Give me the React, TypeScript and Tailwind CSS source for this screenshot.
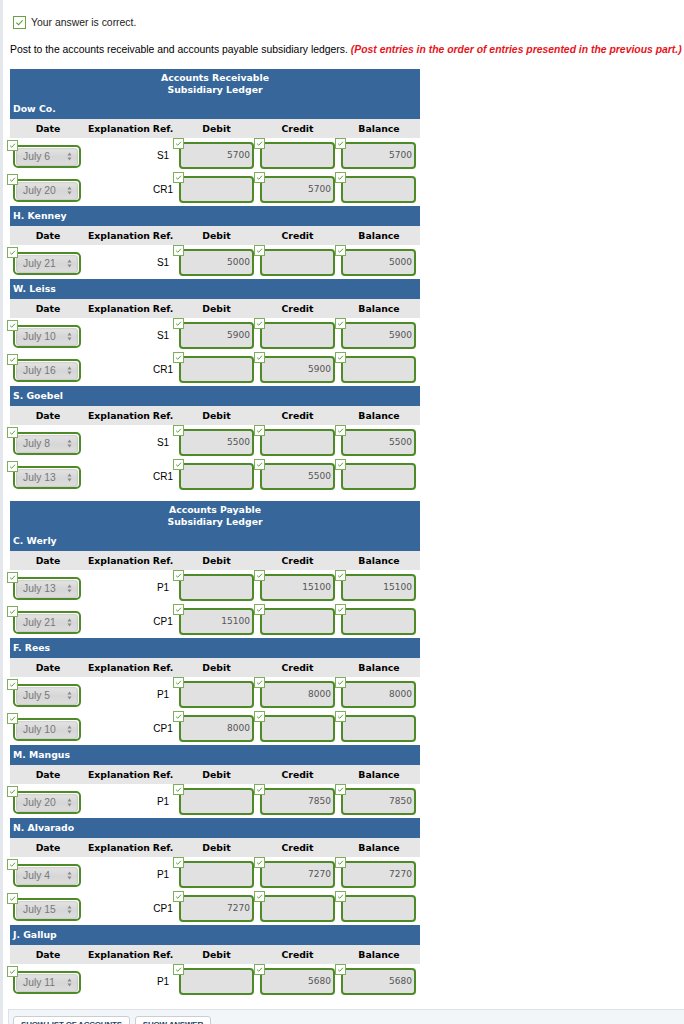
import React from "react";

type Row = { date: string; ref: string; debit: string; credit: string; balance: string };
type Account = { name: string; rows: Row[] };

const r = (date: string, ref: string, debit: string, credit: string, balance: string): Row => ({ date, ref, debit, credit, balance });

const AR: Account[] = [
  { name: "Dow Co.", rows: [r("July 6", "S1", "5700", "", "5700"), r("July 20", "CR1", "", "5700", "")] },
  { name: "H. Kenney", rows: [r("July 21", "S1", "5000", "", "5000")] },
  { name: "W. Leiss", rows: [r("July 10", "S1", "5900", "", "5900"), r("July 16", "CR1", "", "5900", "")] },
  { name: "S. Goebel", rows: [r("July 8", "S1", "5500", "", "5500"), r("July 13", "CR1", "", "5500", "")] },
];

const AP: Account[] = [
  { name: "C. Werly", rows: [r("July 13", "P1", "", "15100", "15100"), r("July 21", "CP1", "15100", "", "")] },
  { name: "F. Rees", rows: [r("July 5", "P1", "", "8000", "8000"), r("July 10", "CP1", "8000", "", "")] },
  { name: "M. Mangus", rows: [r("July 20", "P1", "", "7850", "7850")] },
  { name: "N. Alvarado", rows: [r("July 4", "P1", "", "7270", "7270"), r("July 15", "CP1", "7270", "", "")] },
  { name: "J. Gallup", rows: [r("July 11", "P1", "", "5680", "5680")] },
];

const GRID = "grid grid-cols-[78px_62px_26px_81px_81px_82px]";

function Check({ size = 11 }: { size?: number }) {
  return (
    <div
      className="bg-white border border-[#7fae5c] flex items-center justify-center"
      style={{ width: size, height: size }}
    >
      <svg viewBox="0 0 10 10" width={size - 4} height={size - 4}>
        <path d="M1.5 5.2 L4 7.5 L8.5 2.5" fill="none" stroke="#4f9a2a" strokeWidth="1.3" />
      </svg>
    </div>
  );
}

function ColHeader() {
  return (
    <div className={`${GRID} h-[19px] bg-[#e6e6e6] items-center text-[9.3px] font-bold text-black font-['DejaVu_Sans',sans-serif]`}>
      <div className="text-center pr-[2px]">Date</div>
      <div className="text-center pr-[3px]">Explanation</div>
      <div className="text-center">Ref.</div>
      <div className="text-center">Debit</div>
      <div className="text-center">Credit</div>
      <div className="text-center">Balance</div>
    </div>
  );
}

function NumCell({ value }: { value: string }) {
  return (
    <div className="relative pl-[3px] pt-[4px]">
      <div className="absolute left-[-3px] top-0 z-10">
        <Check />
      </div>
      <div className="w-[75px] h-[27px] rounded-[4px] border-2 border-[#4e8a26] bg-[#e1e1e1] flex items-center justify-end pr-[2px] text-[9px] text-[#555] font-['DejaVu_Sans',sans-serif]">
        {value}
      </div>
    </div>
  );
}

function DateCell({ value }: { value: string }) {
  return (
    <div className="relative pl-[3px] pt-[7px]">
      <div className="absolute left-[-3px] top-[2px] z-10">
        <Check />
      </div>
      <div className="w-[68px] h-[23px] rounded-[5px] border-2 border-[#4e8a26] bg-white flex items-center px-[1px]">
        <div className="w-full h-[18px] rounded-[4px] bg-gradient-to-b from-[#e4e4e4] via-[#d6d6d6] to-[#dedede] shadow-[inset_0_0_2px_rgba(0,0,0,0.25)] flex items-center justify-between pl-[7px] pr-[6px] text-[10.3px] text-[#777] font-['Liberation_Sans',sans-serif]">
          <span>{value}</span>
          <svg width="5" height="9" viewBox="0 0 5 9">
            <path d="M2.5 0.5 L4.5 3.5 L0.5 3.5 Z" fill="#888" />
            <path d="M2.5 8.5 L4.5 5.5 L0.5 5.5 Z" fill="#888" />
          </svg>
        </div>
      </div>
    </div>
  );
}

function DataRow({ row }: { row: Row }) {
  return (
    <div className={`${GRID} h-[34px] bg-white`}>
      <DateCell value={row.date} />
      <div />
      <div className="flex items-center justify-center pt-[1px] text-[10px] text-black font-['Liberation_Sans',sans-serif]">
        {row.ref}
      </div>
      <NumCell value={row.debit} />
      <NumCell value={row.credit} />
      <NumCell value={row.balance} />
    </div>
  );
}

function NameBar({ name }: { name: string }) {
  return (
    <div className="h-[20px] bg-[#36669a] flex items-center pl-[3px] text-[9.3px] font-bold text-white font-['DejaVu_Sans',sans-serif]">
      {name}
    </div>
  );
}

function Ledger({ title, accounts }: { title: string; accounts: Account[] }) {
  return (
    <div className="w-[410px]">
      {accounts.map((acc, i) => (
        <div key={acc.name}>
          {i === 0 ? (
            <div className="bg-[#36669a] h-[50px] flex flex-col">
              <div className="pt-[3px] text-center text-[9.3px] leading-[12px] font-bold text-white font-['DejaVu_Sans',sans-serif]">
                <div>{title}</div>
                <div>Subsidiary Ledger</div>
              </div>
              <div className="mt-auto">
                <NameBar name={acc.name} />
              </div>
            </div>
          ) : (
            <NameBar name={acc.name} />
          )}
          <ColHeader />
          {acc.rows.map((row, j) => (
            <DataRow key={j} row={row} />
          ))}
        </div>
      ))}
    </div>
  );
}

export default function App() {
  return (
    <div className="w-[684px] h-[1024px] overflow-hidden bg-white border-l-[3px] border-[#e4e8ec] font-['Liberation_Sans',sans-serif]">
      <div className="pl-[7px]">
        <div className="pt-[16px] flex items-center h-[29px] pl-[3px]">
          <div className="w-[13px] h-[13px] border border-[#6aa142] bg-white flex items-center justify-center">
            <svg viewBox="0 0 10 10" width="9" height="9">
              <path d="M1.5 5.2 L4 7.5 L8.5 2.5" fill="none" stroke="#4f9a2a" strokeWidth="1.2" />
            </svg>
          </div>
          <span className="ml-[5px] text-[10.4px] text-[#222]">Your answer is correct.</span>
        </div>
        <div className="mt-[14px] h-[14px] leading-[14px] text-[10.4px] text-black whitespace-nowrap">
          Post to the accounts receivable and accounts payable subsidiary ledgers.{" "}
          <span className="italic font-bold text-[#e8141b]">
            (Post entries in the order of entries presented in the previous part.)
          </span>
        </div>
        <div className="mt-[12px]">
          <Ledger title="Accounts Receivable" accounts={AR} />
        </div>
        <div className="mt-[8px]">
          <Ledger title="Accounts Payable" accounts={AP} />
        </div>
      </div>
      <div className="mt-[11px] ml-[5px] h-[40px] bg-[#f3f6f9] border-t border-l border-[#dde2e8] pt-[6px] pl-[4px] flex gap-[5px]">
        <div className="h-[20px] px-[7px] bg-white border border-[#c9ced6] rounded-[3px] flex items-start pt-[3px] text-[8px] leading-[10px] font-bold text-[#243f66] tracking-tight">
          SHOW LIST OF ACCOUNTS
        </div>
        <div className="h-[20px] px-[7px] bg-white border border-[#c9ced6] rounded-[3px] flex items-start pt-[3px] text-[8px] leading-[10px] font-bold text-[#243f66] tracking-tight">
          SHOW ANSWER
        </div>
      </div>
    </div>
  );
}
